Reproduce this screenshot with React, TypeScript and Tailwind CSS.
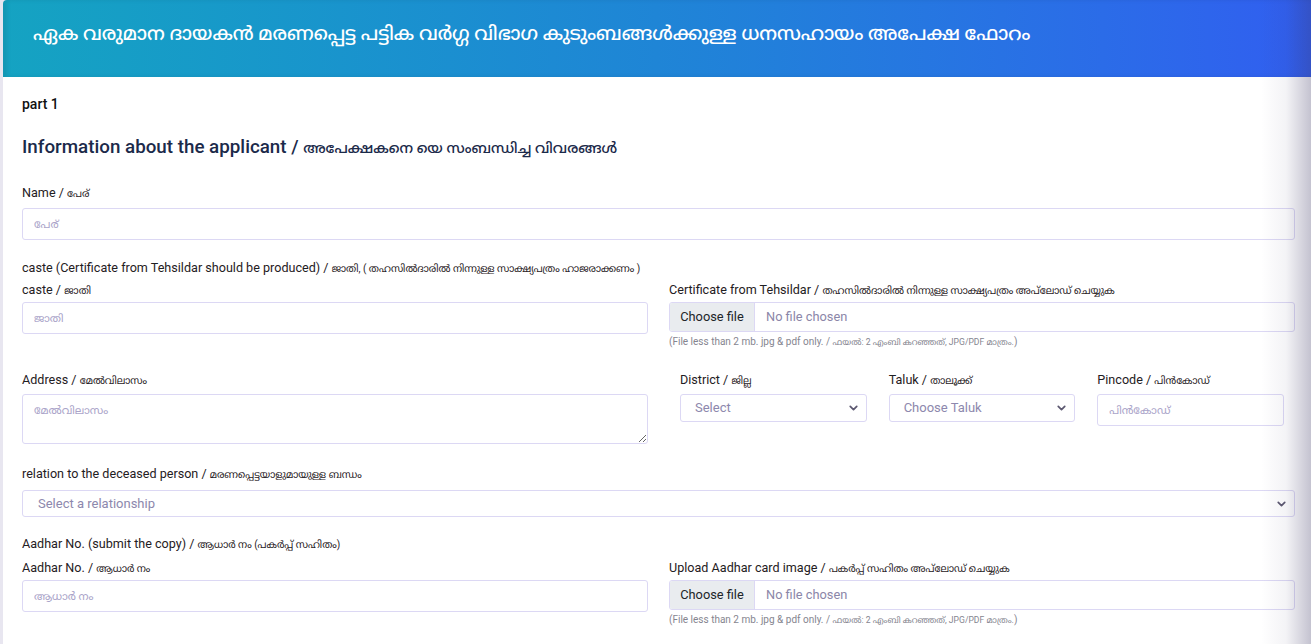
import { ChevronDown } from "lucide-react";

const font = { fontFamily: "Roboto, 'Noto Sans', 'Noto Sans Malayalam', 'DejaVu Sans', sans-serif" };

function Label({ en, ml, className = "" }: { en: string; ml: string; className?: string }) {
  return (
    <div className={`h-[16px] text-[12.6px] text-[#1f2023] leading-[16px] whitespace-nowrap ${className}`}>
      {en} / <span className="text-[10px]">{ml}</span>
    </div>
  );
}

function TextInput({ placeholder, className = "" }: { placeholder: string; className?: string }) {
  return (
    <input
      placeholder={placeholder}
      className={`block w-full h-[32px] border border-[#dcd8f4] rounded-[3px] px-[11px] text-[11px] placeholder:text-[#aaa4c9] outline-none ${className}`}
    />
  );
}

function FileInput() {
  return (
    <div>
      <div className="flex h-[30px] border border-[#dcd8f4] rounded-[3px] overflow-hidden text-[12.8px]">
        <div className="w-[85px] bg-[#e9ecef] border-r border-[#dcd8f4] flex items-center justify-center text-[#212529]">
          Choose file
        </div>
        <div className="flex items-center pl-[11px] text-[#8b86a8]">No file chosen</div>
      </div>
      <div className="mt-[3px] h-[14px] leading-[14px] text-[10px] text-[#85858f] whitespace-nowrap">
        (File less than 2 mb. jpg &amp; pdf only. / <span className="text-[8.6px]">ഫയൽ: 2 എംബി കറഞ്ഞത്, JPG/PDF മാത്രം.</span>)
      </div>
    </div>
  );
}

function Select({ text, h = "h-[28px]", pl = "pl-[14px]" }: { text: string; h?: string; pl?: string }) {
  return (
    <div className={`relative ${h} border border-[#dcd8f4] rounded-[3px] flex items-center ${pl} text-[13px] text-[#8d88ad]`}>
      {text}
      <ChevronDown className="absolute right-[6px] top-1/2 -translate-y-1/2 w-[13px] h-[13px] text-[#5c5870]" strokeWidth={3.2} />
    </div>
  );
}

export default function App() {
  return (
    <div className="relative min-h-screen bg-[#e8e6f0] pl-[3px] overflow-hidden" style={font}>
      {/* header */}
      <div className="h-[77px] bg-gradient-to-r from-[#15a3c2] via-[#1f85d6] to-[#315ef0] flex items-center pl-[30px] rounded-tl-[4px] shadow-[inset_4px_0_4px_rgba(0,0,0,0.08)]">
        <h1 className="text-white text-[19px] font-medium -mt-[8px] whitespace-nowrap">
          ഏക വരുമാന ദായകൻ മരണപ്പെട്ട പട്ടിക വർഗ്ഗ വിഭാഗ കുടുംബങ്ങൾക്കുള്ള ധനസഹായം അപേക്ഷ ഫോറം
        </h1>
      </div>

      {/* body */}
      <div className="bg-white min-h-[567px] pl-[19px] pr-[16px] pt-[17px] pb-6">
        <div className="h-[20px] leading-[20px] text-[14px] font-medium text-[#111]">part 1</div>
        <h2 className="mt-[20px] h-[26px] leading-[26px] text-[18.8px] font-medium text-[#1b2a4a] whitespace-nowrap">
          Information about the applicant / <span className="text-[14.5px]">അപേക്ഷകനെ യെ സംബന്ധിച്ച വിവരങ്ങൾ</span>
        </h2>

        <Label en="Name" ml="പേര്" className="mt-[25px]" />
        <TextInput placeholder="പേര്" className="mt-[7px]" />

        <div className="mt-[20px] h-[16px] text-[12.6px] text-[#1f2023] leading-[16px] whitespace-nowrap">
          caste (Certificate from Tehsildar should be produced) / <span className="text-[10px]">ജാതി, ( തഹസിൽദാരിൽ നിന്നുള്ള സാക്ഷ്യപത്രം ഹാജരാക്കണം )</span>
        </div>

        <div className="mt-[6px] grid grid-cols-2 gap-x-[21px]">
          <div>
            <Label en="caste" ml="ജാതി" />
            <TextInput placeholder="ജാതി" className="mt-[4px] h-[30px]" />
          </div>
          <div>
            <Label en="Certificate from Tehsildar" ml="തഹസിൽദാരിൽ നിന്നുള്ള സാക്ഷ്യപത്രം അപ്‌ലോഡ് ചെയ്യുക" />
            <div className="mt-[4px]">
              <FileInput />
            </div>
          </div>
        </div>

        <div className="mt-[23px] grid grid-cols-2 gap-x-[21px]">
          <div>
            <Label en="Address" ml="മേൽവിലാസം" />
            <textarea
              placeholder="മേൽവിലാസം"
              className="mt-[6px] block w-full h-[50px] border border-[#dcd8f4] rounded-[3px] px-[11px] py-[8px] text-[11px] placeholder:text-[#aaa4c9] outline-none"
            />
          </div>
          <div className="grid grid-cols-3 gap-x-[22px] px-[11px]">
            <div>
              <Label en="District" ml="ജില്ല" />
              <div className="mt-[6px]">
                <Select text="Select" />
              </div>
            </div>
            <div>
              <Label en="Taluk" ml="താലൂക്ക്" />
              <div className="mt-[6px]">
                <Select text="Choose Taluk" />
              </div>
            </div>
            <div>
              <Label en="Pincode" ml="പിൻകോഡ്" />
              <TextInput placeholder="പിൻകോഡ്" className="mt-[6px]" />
            </div>
          </div>
        </div>

        <Label en="relation to the deceased person" ml="മരണപ്പെട്ടയാളുമായുള്ള ബന്ധം" className="mt-[22px]" />
        <div className="mt-[8px]">
          <Select text="Select a relationship" h="h-[27px]" pl="pl-[15px]" />
        </div>

        <Label en="Aadhar No. (submit the copy)" ml="ആധാർ നം (പകർപ്പ് സഹിതം)" className="mt-[19px]" />
        <div className="mt-[8px] grid grid-cols-2 gap-x-[21px]">
          <div>
            <Label en="Aadhar No." ml="ആധാർ നം" />
            <TextInput placeholder="ആധാർ നം" className="mt-[4px] h-[30px]" />
          </div>
          <div>
            <Label en="Upload Aadhar card image" ml="പകർപ്പ് സഹിതം അപ്‌ലോഡ് ചെയ്യുക" />
            <div className="mt-[4px]">
              <FileInput />
            </div>
          </div>
        </div>
      </div>

      {/* right edge shade */}
      <div className="pointer-events-none absolute top-0 right-0 h-full w-[50px] bg-gradient-to-r from-transparent via-[rgba(60,55,100,0.06)] to-[rgba(60,55,100,0.3)]" />
    </div>
  );
}
